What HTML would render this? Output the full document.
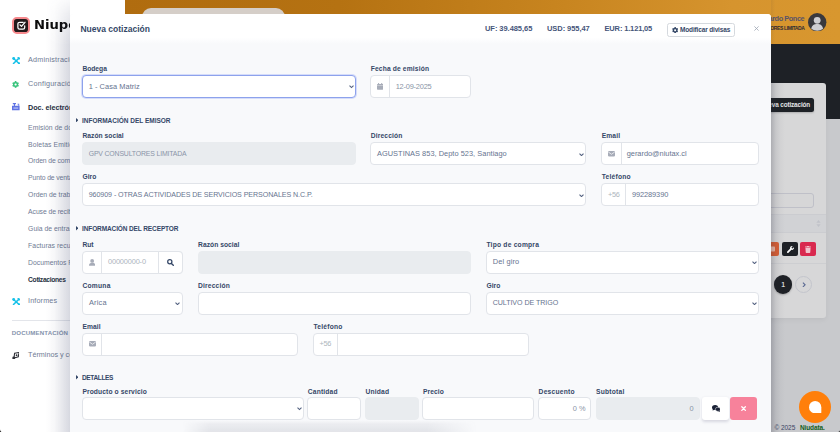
<!DOCTYPE html>
<html lang="es"><head><meta charset="utf-8"><title>Nueva cotización</title>
<style>
*{box-sizing:border-box;margin:0;padding:0}
html,body{width:840px;height:432px;overflow:hidden;background:#c9cacd;font-family:"Liberation Sans",sans-serif}
#app{position:relative;width:840px;height:432px;overflow:hidden}
#app div,#app span.t,#app svg{position:absolute}
.t{white-space:nowrap;display:block}
.inp{background:#fff;border:1px solid #e1e4e9;border-radius:4px}
.dis{background:#e9ecef;border:1px solid #e9ecef;border-radius:4px}

</style></head><body>
<div id="app">
<div style="left:125px;top:0px;width:715px;height:44px;background:linear-gradient(90deg,#b06c0f 0%,#b57212 30%,#c7841f 60%,#d6942e 85%,#d8972f 100%);"></div>
<div style="left:125px;top:43.7px;width:715px;height:75px;background:#1e2126;"></div>
<div style="left:125px;top:118.5px;width:715px;height:314px;background:#c8c9cc;"></div>
<div style="left:141.5px;top:8px;width:143px;height:30px;background:#d5cec8;border-radius:9px;"></div>
<span class="t" style="top:14.39px;font-size:7.3px;line-height:10.22px;font-weight:700;color:#5a5468;right:35.8px;letter-spacing:-0.406px;">Gerardo Ponce</span>
<span class="t" style="top:24.5px;font-size:5px;line-height:7.0px;font-weight:700;color:#2e2a33;right:35.5px;letter-spacing:-0.378px;">GPV CONSULTORES LIMITADA</span>
<svg style="left:808.300px;top:12.800px" width="18.400" height="18.400" viewBox="0 0 19 19"><circle cx="9.500" cy="9.500" r="9.500" fill="#39393d"/><circle cx="9.500" cy="7.600" r="3.500" fill="#cfcfd2"/><path d="M3.400 16.200c.6-3.600 3-4.800 6.100-4.800s5.500 1.200 6.100 4.800a9.500 9.500 0 0 1-12.200 0z" fill="#cfcfd2"/></svg>
<div style="left:700px;top:82.8px;width:126.4px;height:235.3px;background:#d7d7d8;border-radius:3px;box-shadow:0 2px 5px rgba(0,0,0,.05);"></div>
<div style="left:700px;top:213.5px;width:126.4px;height:19.7px;background:#d1d2d5;border-top:1px solid #cbccd0;border-bottom:1px solid #cbccd0;"></div>
<div style="left:700px;top:263.3px;width:126.4px;height:0.8px;background:#cdced1;"></div>
<div style="left:740px;top:98px;width:74.4px;height:13.8px;background:#1e2126;border-radius:2.500px;box-shadow:0 1px 2px rgba(0,0,0,.2);"></div>
<span class="t" style="top:100.52px;font-size:6.4px;line-height:8.96px;font-weight:700;color:#e4e4e6;right:29.9px;letter-spacing:-0.137px;">+ Nueva cotización</span>
<div style="left:720px;top:193px;width:94.4px;height:15.3px;border:1px solid #bfc0c8;border-radius:3px;background:#d6d6d7;"></div>
<svg style="left:816.400px;top:220px" width="5" height="7" viewBox="0 0 5 7"><path d="M2.500 0L4.600 2.800H0.400z" fill="#c0c2c9"/><path d="M2.500 7L4.600 4.200H0.400z" fill="#c0c2c9"/></svg>
<div style="left:764px;top:242.3px;width:15.3px;height:13.4px;background:#d95f35;border-radius:2px;"></div>
<div style="left:782.2px;top:242.3px;width:15.8px;height:13.4px;background:#1e2126;border-radius:2px;"></div>
<div style="left:800.2px;top:242.3px;width:15.8px;height:13.4px;background:#d9294f;border-radius:2px;"></div>
<svg style="left:786.600px;top:245.500px" width="7" height="7" viewBox="0 0 512 512"><path fill="#fff" d="M507.730 109.100c-2.240-9.030-13.540-12.090-20.120-5.510l-74.360 74.360-67.880-11.310-11.310-67.880 74.360-74.360c6.620-6.620 3.430-17.900-5.660-20.160-47.380-11.740-99.550.910-136.580 37.930-39.640 39.640-50.550 97.100-34.050 147.200L18.740 402.760c-24.990 24.990-24.990 65.510 0 90.500 24.990 24.990 65.510 24.990 90.500 0l213.210-213.210c50.120 16.710 107.470 5.680 147.370-34.220 37.070-37.070 49.700-89.320 37.910-136.730z"/></svg>
<svg style="left:805.100px;top:245.500px" width="6" height="7" viewBox="0 0 448 512"><path fill="#f1c4ce" d="M432 32H312l-9.400-18.700A24 24 0 0 0 281.100 0H166.800a23.720 23.720 0 0 0-21.400 13.300L136 32H16A16 16 0 0 0 0 48v32a16 16 0 0 0 16 16h416a16 16 0 0 0 16-16V48a16 16 0 0 0-16-16zM53.200 467a48 48 0 0 0 47.900 45h245.800a48 48 0 0 0 47.900-45L416 128H32z"/></svg>
<svg style="left:770px;top:246px" width="6" height="6" viewBox="0 0 6 6"><rect x="0" y="0.500" width="5" height="5" rx="0.800" fill="#efb9a6"/></svg>
<div style="left:773.8px;top:275.2px;width:18.6px;height:18.6px;background:#1e2126;border-radius:50%;box-shadow:0 1px 2px rgba(0,0,0,.25);"></div>
<span class="t" style="top:279.84px;font-size:6.8px;line-height:9.52px;font-weight:700;color:#d7d7d8;left:781.3px;">1</span>
<div style="left:795.3px;top:275.9px;width:17.2px;height:17.2px;border:1px solid #c3c5cc;border-radius:50%;"></div>
<svg style="left:802px;top:281.800px" width="4" height="5.600" viewBox="0 0 4 5.600"><path d="M0.900 0.600L3.100 2.800 0.900 5" fill="none" stroke="#5b6a93" stroke-width="1.100"/></svg>
<span class="t" style="top:423.15px;font-size:6.5px;line-height:9.1px;font-weight:400;color:#3c4766;left:774.4px;letter-spacing:-0.033px;">© 2025</span>
<span class="t" style="top:423.15px;font-size:6.5px;line-height:9.1px;font-weight:700;color:#145c20;left:799.9px;letter-spacing:-0.108px;">Niudata.</span>
<div style="left:799.3px;top:390.5px;width:32.2px;height:32.2px;background:#ff7f0a;border-radius:50%;"></div>
<svg style="left:809.300px;top:400.700px" width="12.300" height="12.300" viewBox="0 0 12 12"><path d="M6 0a6 6 0 0 1 6 6v5.300a.700.700 0 0 1-.7.700H6a6 6 0 0 1 0-12z" fill="#fff"/></svg>
<div style="left:771px;top:0px;width:4px;height:44px;background:linear-gradient(90deg,rgba(40,42,60,.07),rgba(40,42,60,0));"></div>
<div style="left:771px;top:82px;width:14px;height:350px;background:linear-gradient(90deg,rgba(40,42,60,.24),rgba(40,42,60,.09) 35%,rgba(40,42,60,.03) 65%,rgba(40,42,60,0));"></div>
<div style="left:0px;top:0px;width:124.7px;height:432px;background:#fff;"></div>
<div style="left:12.3px;top:16.5px;width:17.7px;height:17.7px;background:#231a1b;border:2px solid #f7898d;border-radius:4.800px;"></div>
<svg style="left:15.600px;top:19.800px" width="11" height="11" viewBox="0 0 11 11"><path d="M7.200 2.300H3.600a1.700 1.700 0 0 0-1.700 1.700v3.400a1.700 1.700 0 0 0 1.700 1.700h3.400a1.700 1.700 0 0 0 1.700-1.700V5.800" fill="none" stroke="#fff" stroke-width="1.250" stroke-linecap="round"/><path d="M4 4.900l1.500 1.500 3.500-4.100" fill="none" stroke="#fff" stroke-width="1.300" stroke-linecap="round" stroke-linejoin="round"/></svg>
<span class="t" style="top:16.91px;font-size:11.7px;line-height:16.38px;font-weight:700;color:#0c0c0c;left:34.2px;font-family:'DejaVu Sans',sans-serif;transform:scaleX(1.125);transform-origin:0 50%;">Niupos</span>
<span class="t" style="top:54.96px;font-size:7.2px;line-height:10.08px;font-weight:400;color:#6f7b94;left:28.1px;letter-spacing:0.204px;">Administración</span>
<span class="t" style="top:78.56px;font-size:7.2px;line-height:10.08px;font-weight:400;color:#6f7b94;left:28.1px;letter-spacing:0.214px;">Configuración</span>
<span class="t" style="top:103.16px;font-size:7.2px;line-height:10.08px;font-weight:700;color:#252f40;left:28.1px;letter-spacing:-0.027px;">Doc. electrónicos</span>
<span class="t" style="top:123.44px;font-size:6.8px;line-height:9.52px;font-weight:400;color:#6f7b94;left:28.1px;letter-spacing:0.064px;">Emisión de documentos</span>
<span class="t" style="top:140.34px;font-size:6.8px;line-height:9.52px;font-weight:400;color:#6f7b94;left:28.1px;letter-spacing:0.111px;">Boletas Emitidas</span>
<span class="t" style="top:156.24px;font-size:6.8px;line-height:9.52px;font-weight:400;color:#6f7b94;left:28.1px;letter-spacing:-0.091px;">Orden de compra</span>
<span class="t" style="top:173.14px;font-size:6.8px;line-height:9.52px;font-weight:400;color:#6f7b94;left:28.1px;letter-spacing:-0.097px;">Punto de venta</span>
<span class="t" style="top:190.14px;font-size:6.8px;line-height:9.52px;font-weight:400;color:#6f7b94;left:28.1px;letter-spacing:0.03px;">Orden de trabajo</span>
<span class="t" style="top:207.14px;font-size:6.8px;line-height:9.52px;font-weight:400;color:#6f7b94;left:28.1px;letter-spacing:-0.074px;">Acuse de recibo</span>
<span class="t" style="top:224.04px;font-size:6.8px;line-height:9.52px;font-weight:400;color:#6f7b94;left:28.1px;letter-spacing:0.027px;">Guia de entrada</span>
<span class="t" style="top:240.94px;font-size:6.8px;line-height:9.52px;font-weight:400;color:#6f7b94;left:28.1px;letter-spacing:0.065px;">Facturas recurrentes</span>
<span class="t" style="top:258.04px;font-size:6.8px;line-height:9.52px;font-weight:400;color:#6f7b94;left:28.1px;letter-spacing:0.016px;">Documentos Recibidos</span>
<span class="t" style="top:275.01px;font-size:6.7px;line-height:9.38px;font-weight:700;color:#252f40;left:28.1px;letter-spacing:-0.305px;">Cotizaciones</span>
<span class="t" style="top:295.96px;font-size:7.2px;line-height:10.08px;font-weight:400;color:#6f7b94;left:28.1px;letter-spacing:0.133px;">Informes</span>
<div style="left:11.8px;top:320.2px;width:113px;height:0.8px;background:#e3e5ea;"></div>
<span class="t" style="top:328.73px;font-size:6.1px;line-height:8.54px;font-weight:700;color:#8392ab;left:11.8px;letter-spacing:0.151px;">DOCUMENTACIÓN</span>
<span class="t" style="top:350.16px;font-size:7.2px;line-height:10.08px;font-weight:400;color:#6f7b94;left:28.1px;letter-spacing:-0.005px;">Términos y condiciones</span>
<svg style="left:11.800px;top:56.5px" width="8.300" height="7.600" viewBox="0 0 8.300 7.600"><path d="M1.300 1.200l5.800 5.300M7 1.100L1.500 6.500" stroke="#17c1e8" stroke-width="1.500" stroke-linecap="round"/><circle cx="1.700" cy="1.500" r="1.400" fill="#17c1e8"/><circle cx="7" cy="6.300" r="1.100" fill="#17c1e8"/><path d="M6 0.300l2 1.800" stroke="#17c1e8" stroke-width="1.200" stroke-linecap="round"/></svg>
<svg style="left:12.200px;top:80.800px" width="7.200" height="7" viewBox="0 0 512 512"><path fill="#3ac47d" d="M487.400 315.700l-42.600-24.600c4.300-23.200 4.300-47 0-70.200l42.600-24.600c4.900-2.800 7.100-8.600 5.500-14-11.100-35.600-30-67.800-54.700-94.600-3.800-4.100-10-5.100-14.800-2.300L380.800 110c-17.900-15.400-38.500-27.300-60.800-35.100V25.800c0-5.600-3.900-10.500-9.400-11.700-36.700-8.200-74.300-7.800-109.200 0-5.500 1.200-9.400 6.100-9.400 11.700V75c-22.200 7.900-42.800 19.800-60.800 35.100L88.700 85.500c-4.900-2.800-11-1.900-14.800 2.300-24.700 26.700-43.600 58.900-54.700 94.600-1.700 5.400.6 11.200 5.500 14L67.300 221c-4.300 23.200-4.300 47 0 70.200l-42.600 24.600c-4.900 2.800-7.100 8.600-5.500 14 11.100 35.600 30 67.800 54.700 94.600 3.800 4.100 10 5.100 14.800 2.300l42.600-24.600c17.900 15.400 38.500 27.300 60.800 35.100v49.200c0 5.600 3.900 10.500 9.400 11.700 36.700 8.200 74.300 7.800 109.200 0 5.500-1.200 9.400-6.100 9.400-11.700v-49.200c22.200-7.900 42.800-19.800 60.800-35.100l42.600 24.600c4.900 2.800 11 1.900 14.800-2.300 24.700-26.700 43.600-58.900 54.700-94.600 1.500-5.500-.7-11.300-5.600-14.100zM256 336c-44.100 0-80-35.900-80-80s35.900-80 80-80 80 35.900 80 80-35.900 80-80 80z"/></svg>
<svg style="left:12.200px;top:103.300px" width="7.600" height="7.300" viewBox="0 0 7.600 7.300"><path d="M0.800 0h3.200v1.300H3v1.400h3.400V1.500H5.500V0.700h1.700v2h0.400v4.600H0V2.700h1.900V1.300H0.800z" fill="#5e72e4"/><rect x="1.400" y="4.600" width="4.800" height="0.900" fill="#fff" opacity=".8"/></svg>
<svg style="left:11.800px;top:297.7px" width="8.300" height="7.600" viewBox="0 0 8.300 7.600"><path d="M1.300 1.200l5.800 5.300M7 1.100L1.500 6.500" stroke="#17c1e8" stroke-width="1.500" stroke-linecap="round"/><circle cx="1.700" cy="1.500" r="1.400" fill="#17c1e8"/><circle cx="7" cy="6.300" r="1.100" fill="#17c1e8"/><path d="M6 0.300l2 1.800" stroke="#17c1e8" stroke-width="1.200" stroke-linecap="round"/></svg>
<svg style="left:11.800px;top:351.500px" width="7.600" height="7.300" viewBox="0 0 7.600 7.300"><path d="M2.600 1.300L7 0.500 6.300 4.800 2 6z" fill="none" stroke="#2d2f36" stroke-width="1.100"/><circle cx="1.700" cy="5.900" r="1.400" fill="#2d2f36"/><circle cx="4.600" cy="3.200" r="0.900" fill="#2d2f36"/></svg>
<div style="left:46px;top:0px;width:24px;height:432px;background:linear-gradient(90deg,rgba(52,60,100,0),rgba(52,60,100,.04) 35%,rgba(52,60,100,.20));-webkit-mask-image:linear-gradient(180deg,rgba(0,0,0,.15) 0,rgba(0,0,0,.5) 14px,#000 45px);mask-image:linear-gradient(180deg,rgba(0,0,0,.15) 0,rgba(0,0,0,.5) 14px,#000 45px);"></div>
<div style="left:70px;top:14px;width:701.4px;height:430px;background:#f8f9fb;border-radius:3.500px 3.500px 0 0;"></div>
<div style="left:70px;top:14px;width:701.4px;height:30px;background:linear-gradient(180deg,#fff 78%,#f8f9fb);border-radius:3.500px 3.500px 0 0;"></div>
<span class="t" style="top:23.75px;font-size:8.5px;line-height:11.9px;font-weight:700;color:#344767;left:80.4px;letter-spacing:0.011px;">Nueva cotización</span>
<span class="t" style="top:23.75px;font-size:7.5px;line-height:10.5px;font-weight:700;color:#45557a;left:485px;letter-spacing:-0.054px;">UF: 39.485,65</span>
<span class="t" style="top:23.75px;font-size:7.5px;line-height:10.5px;font-weight:700;color:#45557a;left:547px;letter-spacing:-0.066px;">USD: 955,47</span>
<span class="t" style="top:23.75px;font-size:7.5px;line-height:10.5px;font-weight:700;color:#45557a;left:604.5px;letter-spacing:-0.152px;">EUR: 1.121,05</span>
<div style="left:667.2px;top:23px;width:68.1px;height:13.8px;background:#fff;border:1px solid #d5d9de;border-radius:2.500px;"></div>
<svg style="left:671.500px;top:26.800px" width="6.300" height="6.300" viewBox="0 0 512 512"><path fill="#344767" d="M487.400 315.700l-42.600-24.600c4.300-23.200 4.300-47 0-70.200l42.600-24.600c4.900-2.800 7.100-8.600 5.500-14-11.100-35.600-30-67.800-54.700-94.600-3.800-4.100-10-5.100-14.800-2.300L380.800 110c-17.900-15.400-38.500-27.300-60.800-35.100V25.800c0-5.600-3.900-10.500-9.400-11.700-36.700-8.200-74.300-7.800-109.200 0-5.500 1.200-9.400 6.100-9.400 11.700V75c-22.200 7.900-42.800 19.800-60.800 35.100L88.700 85.500c-4.900-2.800-11-1.900-14.800 2.300-24.700 26.700-43.600 58.900-54.700 94.600-1.700 5.400.6 11.200 5.500 14L67.300 221c-4.300 23.200-4.300 47 0 70.200l-42.600 24.600c-4.900 2.800-7.100 8.600-5.500 14 11.100 35.600 30 67.800 54.700 94.600 3.800 4.100 10 5.100 14.800 2.300l42.600-24.600c17.900 15.400 38.500 27.300 60.800 35.100v49.200c0 5.600 3.900 10.500 9.400 11.700 36.700 8.200 74.300 7.800 109.200 0 5.500-1.200 9.400-6.100 9.400-11.700v-49.200c22.200-7.900 42.800-19.800 60.800-35.100l42.600 24.600c4.900 2.800 11 1.900 14.800-2.300 24.700-26.700 43.600-58.900 54.700-94.600 1.500-5.500-.7-11.300-5.600-14.100zM256 336c-44.100 0-80-35.900-80-80s35.900-80 80-80 80 35.900 80 80-35.900 80-80 80z"/></svg>
<span class="t" style="top:25.45px;font-size:6.5px;line-height:9.1px;font-weight:700;color:#344767;left:680px;letter-spacing:-0.153px;">Modificar divisas</span>
<svg style="left:754px;top:25.800px" width="5" height="5" viewBox="0 0 5 5"><path d="M0.400 0.400l4.200 4.200M4.600 0.400L0.400 4.600" stroke="#9ea6b4" stroke-width="0.800"/></svg>
<span class="t" style="top:63.51px;font-size:6.7px;line-height:9.38px;font-weight:700;color:#344767;left:82.4px;letter-spacing:-0.006px;">Bodega</span>
<div class="inp" style="left:82px;top:75px;width:274px;height:23px;border-color:#8da2ec;box-shadow:0 0 0 1px #d5dcfa;"><svg style="right:1.4px;top:9.3px" width="5" height="3.400" viewBox="0 0 5 3.400"><path d="M0.500 0.600L2.500 2.600 4.500 0.600" fill="none" stroke="#52607f" stroke-width="1.100"/></svg></div>
<span class="t" style="top:82.02px;font-size:7.4px;line-height:10.36px;font-weight:400;color:#66748f;left:88.7px;letter-spacing:0.064px;">1 - Casa Matriz</span>
<span class="t" style="top:63.51px;font-size:6.7px;line-height:9.38px;font-weight:700;color:#344767;left:370.7px;letter-spacing:0.145px;">Fecha de emisión</span>
<div class="inp" style="left:370.3px;top:75px;width:100.6px;height:23px;"><div style="left:17.4px;top:0;width:1px;height:21px;background:#e1e4e9"></div></div>
<svg style="left:377px;top:83.300px" width="6.300" height="6.700" viewBox="0 0 6.300 6.700"><rect x="0" y="0.900" width="6.300" height="5.800" rx="0.700" fill="#a7acb8"/><rect x="1.100" y="0" width="1" height="1.800" fill="#a7acb8"/><rect x="4.200" y="0" width="1" height="1.800" fill="#a7acb8"/><rect x="0" y="2.300" width="6.300" height="0.500" fill="#fff" opacity=".7"/></svg>
<span class="t" style="top:82.12px;font-size:7.4px;line-height:10.36px;font-weight:400;color:#8a94a6;left:395.7px;letter-spacing:-0.201px;">12-09-2025</span>
<svg style="left:75.800px;top:118.1px" width="2.400" height="4.400" viewBox="0 0 2.400 4.400"><path d="M0 0L2.400 2.200 0 4.400z" fill="#344767"/></svg>
<span class="t" style="top:115.75px;font-size:6.5px;line-height:9.1px;font-weight:700;color:#344767;left:82px;letter-spacing:-0.01px;">INFORMACIÓN DEL EMISOR</span>
<span class="t" style="top:131.11px;font-size:6.7px;line-height:9.38px;font-weight:700;color:#344767;left:82.4px;letter-spacing:0.037px;">Razón social</span>
<div class="dis" style="left:82px;top:142.3px;width:274px;height:23px;"></div>
<span class="t" style="top:148.67px;font-size:6.9px;line-height:9.66px;font-weight:400;color:#8a94a8;left:88.7px;letter-spacing:-0.151px;">GPV CONSULTORES LIMITADA</span>
<span class="t" style="top:131.11px;font-size:6.7px;line-height:9.38px;font-weight:700;color:#344767;left:370.7px;letter-spacing:0.152px;">Dirección</span>
<div class="inp" style="left:370.3px;top:142.3px;width:216px;height:23px;"><svg style="right:1.4px;top:9.3px" width="5" height="3.400" viewBox="0 0 5 3.400"><path d="M0.500 0.600L2.500 2.600 4.500 0.600" fill="none" stroke="#52607f" stroke-width="1.100"/></svg></div>
<span class="t" style="top:149.32px;font-size:7.4px;line-height:10.36px;font-weight:400;color:#66748f;left:377.0px;letter-spacing:0.034px;">AGUSTINAS 853, Depto 523, Santiago</span>
<span class="t" style="top:131.11px;font-size:6.7px;line-height:9.38px;font-weight:700;color:#344767;left:601.7px;letter-spacing:0.114px;">Email</span>
<div class="inp" style="left:601px;top:142.3px;width:158.3px;height:23px;"><div style="left:18.6px;top:0;width:1px;height:21px;background:#e1e4e9"></div></div>
<svg style="left:608px;top:151.3px" width="7" height="5.400" viewBox="0 0 7 5.400"><rect width="7" height="5.400" rx="0.800" fill="#a7acb8"/><path d="M0.200 0.900L3.500 3.300 6.800 0.900" fill="none" stroke="#fff" stroke-width="0.700"/></svg>
<span class="t" style="top:149.32px;font-size:7.4px;line-height:10.36px;font-weight:400;color:#66748f;left:626.7px;letter-spacing:-0.006px;">gerardo@niutax.cl</span>
<span class="t" style="top:172.11px;font-size:6.7px;line-height:9.38px;font-weight:700;color:#344767;left:82.4px;letter-spacing:0.083px;">Giro</span>
<div class="inp" style="left:82px;top:183.3px;width:504.3px;height:23px;"><svg style="right:1.4px;top:9.3px" width="5" height="3.400" viewBox="0 0 5 3.400"><path d="M0.500 0.600L2.500 2.600 4.500 0.600" fill="none" stroke="#52607f" stroke-width="1.100"/></svg></div>
<span class="t" style="top:190.53px;font-size:7.1px;line-height:9.94px;font-weight:400;color:#66748f;left:88.7px;letter-spacing:-0.064px;">960909 - OTRAS ACTIVIDADES DE SERVICIOS PERSONALES N.C.P.</span>
<span class="t" style="top:172.11px;font-size:6.7px;line-height:9.38px;font-weight:700;color:#344767;left:601.7px;letter-spacing:0.232px;">Teléfono</span>
<div class="inp" style="left:601px;top:183.3px;width:158.3px;height:23px;"><div style="left:23.4px;top:0;width:1px;height:21px;background:#e1e4e9"></div></div>
<span class="t" style="top:190.32px;font-size:7.4px;line-height:10.36px;font-weight:400;color:#adb5bd;left:607.9px;letter-spacing:-0.273px;">+56</span>
<span class="t" style="top:190.32px;font-size:7.4px;line-height:10.36px;font-weight:400;color:#66748f;left:631.9px;letter-spacing:-0.075px;">992289390</span>
<svg style="left:75.800px;top:226.3px" width="2.400" height="4.400" viewBox="0 0 2.400 4.400"><path d="M0 0L2.400 2.200 0 4.400z" fill="#344767"/></svg>
<span class="t" style="top:223.95px;font-size:6.5px;line-height:9.1px;font-weight:700;color:#344767;left:82px;letter-spacing:-0.112px;">INFORMACIÓN DEL RECEPTOR</span>
<span class="t" style="top:240.41px;font-size:6.7px;line-height:9.38px;font-weight:700;color:#344767;left:82.4px;letter-spacing:0.022px;">Rut</span>
<div class="inp" style="left:82.3px;top:250.6px;width:100.4px;height:23px;"><div style="left:18px;top:0;width:1px;height:21px;background:#e1e4e9"></div></div>
<div style="left:157.8px;top:250.6px;width:24.9px;height:23px;border:1px solid #e1e4e9;border-radius:0 4px 4px 0;background:#fff;"></div>
<svg style="left:89px;top:259px" width="6.300" height="6.700" viewBox="0 0 6.300 6.700"><circle cx="3.150" cy="1.900" r="1.900" fill="#a7acb8"/><path d="M0 6.700c0-2.200 1.100-3 3.150-3s3.150.800 3.150 3z" fill="#a7acb8"/></svg>
<span class="t" style="top:256.62px;font-size:7.4px;line-height:10.36px;font-weight:400;color:#adb5bd;left:108px;letter-spacing:-0.163px;">00000000-0</span>
<svg style="left:167px;top:258.600px" width="7" height="7" viewBox="0 0 7 7"><circle cx="2.800" cy="2.800" r="2.100" fill="none" stroke="#344767" stroke-width="1.250"/><path d="M4.400 4.400L6.300 6.300" stroke="#344767" stroke-width="1.400" stroke-linecap="round"/></svg>
<span class="t" style="top:240.41px;font-size:6.7px;line-height:9.38px;font-weight:700;color:#344767;left:198.1px;letter-spacing:0.037px;">Razón social</span>
<div class="dis" style="left:197.7px;top:250.6px;width:273.3px;height:23px;"></div>
<span class="t" style="top:240.41px;font-size:6.7px;line-height:9.38px;font-weight:700;color:#344767;left:486.4px;letter-spacing:0.218px;">Tipo de compra</span>
<div class="inp" style="left:486px;top:250.6px;width:273.3px;height:23px;"><svg style="right:1.4px;top:9.3px" width="5" height="3.400" viewBox="0 0 5 3.400"><path d="M0.500 0.600L2.500 2.600 4.500 0.600" fill="none" stroke="#52607f" stroke-width="1.100"/></svg></div>
<span class="t" style="top:256.62px;font-size:7.4px;line-height:10.36px;font-weight:400;color:#66748f;left:492.7px;letter-spacing:0.147px;">Del giro</span>
<span class="t" style="top:281.41px;font-size:6.7px;line-height:9.38px;font-weight:700;color:#344767;left:82.4px;letter-spacing:0.25px;">Comuna</span>
<div class="inp" style="left:82.3px;top:291.6px;width:100.4px;height:23px;"><svg style="right:1.4px;top:9.3px" width="5" height="3.400" viewBox="0 0 5 3.400"><path d="M0.500 0.600L2.500 2.600 4.500 0.600" fill="none" stroke="#52607f" stroke-width="1.100"/></svg></div>
<span class="t" style="top:297.62px;font-size:7.4px;line-height:10.36px;font-weight:400;color:#66748f;left:89.0px;letter-spacing:0.164px;">Arica</span>
<span class="t" style="top:281.41px;font-size:6.7px;line-height:9.38px;font-weight:700;color:#344767;left:198.1px;letter-spacing:0.152px;">Dirección</span>
<div class="inp" style="left:197.7px;top:291.6px;width:273.3px;height:23px;"></div>
<span class="t" style="top:281.41px;font-size:6.7px;line-height:9.38px;font-weight:700;color:#344767;left:486.4px;letter-spacing:0.083px;">Giro</span>
<div class="inp" style="left:486px;top:291.6px;width:273.3px;height:23px;"><svg style="right:1.4px;top:9.3px" width="5" height="3.400" viewBox="0 0 5 3.400"><path d="M0.500 0.600L2.500 2.600 4.500 0.600" fill="none" stroke="#52607f" stroke-width="1.100"/></svg></div>
<span class="t" style="top:298.83px;font-size:7.1px;line-height:9.94px;font-weight:400;color:#66748f;left:492.7px;letter-spacing:-0.057px;">CULTIVO DE TRIGO</span>
<span class="t" style="top:322.41px;font-size:6.7px;line-height:9.38px;font-weight:700;color:#344767;left:82.4px;letter-spacing:0.114px;">Email</span>
<div class="inp" style="left:82.3px;top:332.6px;width:215.7px;height:23px;"><div style="left:18.2px;top:0;width:1px;height:21px;background:#e1e4e9"></div></div>
<svg style="left:88.8px;top:341.2px" width="7" height="5.400" viewBox="0 0 7 5.400"><rect width="7" height="5.400" rx="0.800" fill="#a7acb8"/><path d="M0.200 0.900L3.500 3.300 6.800 0.900" fill="none" stroke="#fff" stroke-width="0.700"/></svg>
<span class="t" style="top:322.41px;font-size:6.7px;line-height:9.38px;font-weight:700;color:#344767;left:313.4px;letter-spacing:0.232px;">Teléfono</span>
<div class="inp" style="left:313px;top:332.6px;width:215.7px;height:23px;"><div style="left:22.9px;top:0;width:1px;height:21px;background:#e1e4e9"></div></div>
<span class="t" style="top:338.62px;font-size:7.4px;line-height:10.36px;font-weight:400;color:#adb5bd;left:319.4px;letter-spacing:-0.273px;">+56</span>
<svg style="left:75.800px;top:375.40000000000003px" width="2.400" height="4.400" viewBox="0 0 2.400 4.400"><path d="M0 0L2.400 2.200 0 4.400z" fill="#344767"/></svg>
<span class="t" style="top:373.05px;font-size:6.5px;line-height:9.1px;font-weight:700;color:#344767;left:82px;letter-spacing:-0.361px;">DETALLES</span>
<span class="t" style="top:387.11px;font-size:6.7px;line-height:9.38px;font-weight:700;color:#344767;left:82.4px;letter-spacing:0.109px;">Producto o servicio</span>
<span class="t" style="top:387.11px;font-size:6.7px;line-height:9.38px;font-weight:700;color:#344767;left:307.8px;letter-spacing:0.156px;">Cantidad</span>
<span class="t" style="top:387.11px;font-size:6.7px;line-height:9.38px;font-weight:700;color:#344767;left:365.5px;letter-spacing:0.186px;">Unidad</span>
<span class="t" style="top:387.11px;font-size:6.7px;line-height:9.38px;font-weight:700;color:#344767;left:422.9px;letter-spacing:0.109px;">Precio</span>
<span class="t" style="top:387.11px;font-size:6.7px;line-height:9.38px;font-weight:700;color:#344767;left:538.6px;letter-spacing:0.225px;">Descuento</span>
<span class="t" style="top:387.11px;font-size:6.7px;line-height:9.38px;font-weight:700;color:#344767;left:596px;letter-spacing:0.221px;">Subtotal</span>
<div class="inp" style="left:82.3px;top:397.1px;width:221.7px;height:22.7px;"><svg style="right:1.4px;top:9.15px" width="5" height="3.400" viewBox="0 0 5 3.400"><path d="M0.500 0.600L2.500 2.600 4.500 0.600" fill="none" stroke="#52607f" stroke-width="1.100"/></svg></div>
<div class="inp" style="left:307.2px;top:397.1px;width:54.3px;height:22.7px;"></div>
<div class="dis" style="left:365.1px;top:397.1px;width:53.8px;height:22.7px;"></div>
<div class="inp" style="left:422.3px;top:397.1px;width:111.9px;height:22.7px;"></div>
<div class="inp" style="left:538.3px;top:397.1px;width:53.2px;height:22.7px;"></div>
<span class="t" style="top:403.97px;font-size:7.4px;line-height:10.36px;font-weight:400;color:#8a94a6;right:254.5px;">0 %</span>
<div class="dis" style="left:595.7px;top:397.1px;width:104.1px;height:22.7px;"></div>
<span class="t" style="top:403.97px;font-size:7.4px;line-height:10.36px;font-weight:400;color:#8a94a6;right:146.4px;">0</span>
<div style="left:702px;top:397.1px;width:26.8px;height:22.7px;background:#fff;border-radius:3px;box-shadow:0 1.500px 3px rgba(50,50,93,.16);"></div>
<svg style="left:711.500px;top:405px" width="8.500" height="7" viewBox="0 0 8.500 7"><ellipse cx="3.100" cy="2.500" rx="3.100" ry="2.500" fill="#1b2236"/><path d="M0.500 5.600L1.200 3.600 2.800 4.700z" fill="#1b2236"/><ellipse cx="5.900" cy="4.300" rx="2.600" ry="2.100" fill="#1b2236" stroke="#fff" stroke-width="0.500"/><path d="M8.300 6.900L7.500 5.300 6.300 6.200z" fill="#1b2236"/></svg>
<div style="left:730px;top:397.1px;width:27px;height:22.7px;background:#f7829b;border-radius:3px;"></div>
<svg style="left:741px;top:405.900px" width="5.200" height="5.200" viewBox="0 0 5.200 5.200"><path d="M0.800 0.800l3.600 3.600M4.400 0.800L0.800 4.400" stroke="#fff" stroke-width="1.300" stroke-linecap="round"/></svg>
<div style="left:70px;top:420px;width:701.4px;height:12px;background:linear-gradient(180deg,rgba(90,96,115,0),rgba(90,96,115,.08) 35%,rgba(90,96,115,.135));-webkit-mask-image:linear-gradient(90deg,transparent 16%,#000 20%,#000 51%,transparent 58%);mask-image:linear-gradient(90deg,transparent 16%,#000 20%,#000 51%,transparent 58%);"></div>
<svg style="left:0;top:428.500px" width="3.500" height="3.500" viewBox="0 0 5 5"><path d="M0 0c0 3 2 5 5 5H0z" fill="#1a1a1a"/></svg>
<svg style="left:838px;top:430px" width="2" height="2" viewBox="0 0 3 3"><path d="M3 0c0 2-1 3-3 3h3z" fill="#1a1a1a"/></svg>
</div>
</body></html>
